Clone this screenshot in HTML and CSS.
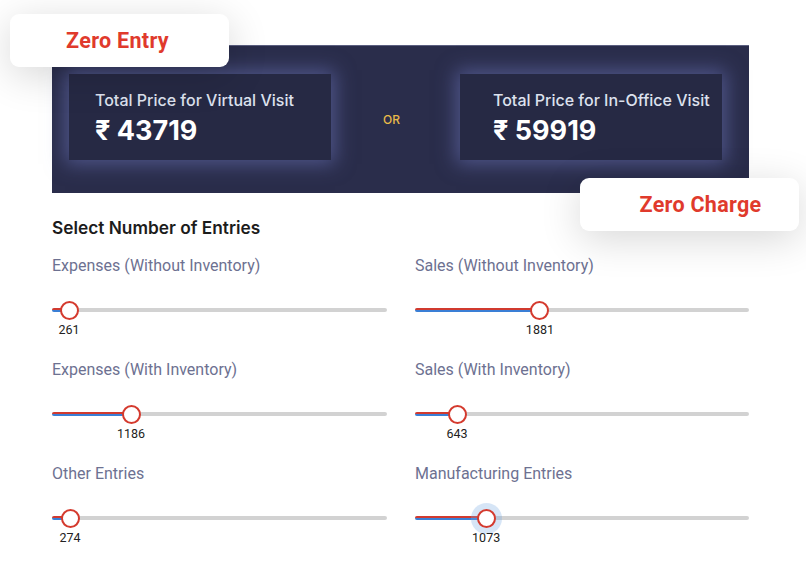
FILE: index.html
```html
<!DOCTYPE html>
<html>
<head>
<meta charset="utf-8">
<link rel="stylesheet" href="styles.css">
</head>
<body>
<div class="page">
  <div class="tag tag-entry">Zero Entry</div>
  <div class="tag tag-charge">Zero Charge</div>

  <div class="panel">
    <div class="price-box">
      <div class="price-title">Total Price for Virtual Visit</div>
      <div class="price-value">₹ 43719</div>
    </div>
    <div class="or">OR</div>
    <div class="price-box price-box-office">
      <div class="price-title">Total Price for In-Office Visit</div>
      <div class="price-value">₹ 59919</div>
    </div>
  </div>

  <h2 class="heading">Select Number of Entries</h2>

  <div class="grid">
    <div class="item">
      <div class="label">Expenses (Without Inventory)</div>
      <div class="slider">
        <div class="track"><div class="fill" style="width:5.1%"></div></div>
        <div class="thumb" style="left:5.1%"></div>
        <div class="value" style="left:5.1%">261</div>
      </div>
    </div>
    <div class="item">
      <div class="label">Sales (Without Inventory)</div>
      <div class="slider">
        <div class="track"><div class="fill" style="width:37.4%"></div></div>
        <div class="thumb" style="left:37.4%"></div>
        <div class="value" style="left:37.4%">1881</div>
      </div>
    </div>
    <div class="item">
      <div class="label">Expenses (With Inventory)</div>
      <div class="slider">
        <div class="track"><div class="fill" style="width:23.6%"></div></div>
        <div class="thumb" style="left:23.6%"></div>
        <div class="value" style="left:23.6%">1186</div>
      </div>
    </div>
    <div class="item">
      <div class="label">Sales (With Inventory)</div>
      <div class="slider">
        <div class="track"><div class="fill" style="width:12.6%"></div></div>
        <div class="thumb" style="left:12.6%"></div>
        <div class="value" style="left:12.6%">643</div>
      </div>
    </div>
    <div class="item">
      <div class="label">Other Entries</div>
      <div class="slider">
        <div class="track"><div class="fill" style="width:5.4%"></div></div>
        <div class="thumb" style="left:5.4%"></div>
        <div class="value" style="left:5.4%">274</div>
      </div>
    </div>
    <div class="item">
      <div class="label">Manufacturing Entries</div>
      <div class="slider">
        <div class="track"><div class="fill" style="width:21.3%"></div></div>
        <div class="thumb focus" style="left:21.3%"></div>
        <div class="value" style="left:21.3%">1073</div>
      </div>
    </div>
  </div>
</div>
</body>
</html>
```

FILE: styles.css
```css
* { box-sizing: border-box; }
html, body { margin: 0; padding: 0; background: #fff; }
body { width: 806px; height: 588px; overflow: hidden; font-family: Roboto, "Liberation Sans", sans-serif; }

.page {
  position: relative;
  padding: 45px 57px 0 52px;
}

.tag {
  position: absolute;
  width: 219px;
  height: 53px;
  background: #fff;
  border-radius: 9px;
  box-shadow: 0 8px 40px rgba(0, 0, 0, 0.16);
  display: flex;
  align-items: center;
  justify-content: center;
  color: #e03a2c;
  font-family: Roboto, "Liberation Sans", sans-serif;
  font-weight: 700;
  font-size: 21.5px;
  letter-spacing: 0.3px;
  z-index: 2;
}
.tag-entry { left: 10px; top: 14px; padding-right: 4px; }
.tag-charge { left: 580px; top: 178px; padding-left: 22px; }

.panel {
  width: 697px;
  height: 148px;
  background: #2a2d4b;
  border-top: 1px solid #5b5f80;
  display: flex;
  align-items: flex-start;
  padding: 28px 27px 0 17px;
}

.price-box {
  width: 262px;
  height: 86px;
  background: #262944;
  box-shadow: 0 0 18px 4px rgba(110, 118, 190, 0.55);
  padding: 16px 0 0 26px;
  color: #fff;
  font-family: Inter, "Noto Sans", sans-serif;
}
.price-box-office { padding-left: 33px; }
.price-title {
  font-size: 16px;
  font-weight: 500;
  color: #dde1ee;
  line-height: 21px;
}
.price-value {
  font-size: 27px;
  font-weight: 700;
  line-height: 32px;
  margin-top: 4px;
  font-family: Inter, "DejaVu Sans", sans-serif;
}

.or {
  flex: 1;
  text-align: center;
  margin-top: 38px;
  padding-right: 8px;
  color: #e9b949;
  font-family: Inter, sans-serif;
  font-size: 12px;
  font-weight: 500;
}

.heading {
  margin: 24px 0 0 0;
  font-family: Inter, Roboto, sans-serif;
  font-size: 17.3px;
  font-weight: 600;
  color: #1c1c1c;
  line-height: 22px;
}

.grid {
  display: grid;
  grid-template-columns: 335px 334px;
  column-gap: 28px;
  margin-top: 17px;
}

.item {
  height: 104px;
}

.label {
  font-size: 16px;
  color: #6d7191;
  line-height: 20px;
}

.slider {
  position: relative;
  margin-top: 32px;
  height: 4px;
}
.track {
  height: 4px;
  background: #d2d2d2;
  border-radius: 2px;
  overflow: hidden;
}
.fill {
  height: 4px;
  background: linear-gradient(#d13a2f 0, #d13a2f 55%, #3a7fd6 55%, #3a7fd6 100%);
}
.thumb {
  position: absolute;
  top: 2px;
  width: 19px;
  height: 19px;
  margin: -9.5px 0 0 -9.5px;
  border-radius: 50%;
  background: #fff;
  border: 2px solid #d43a2e;
}
.thumb.focus {
  box-shadow: 0 0 0 6px rgba(120, 170, 225, 0.3);
}
.value {
  position: absolute;
  top: 15px;
  transform: translateX(-50%);
  font-size: 12.5px;
  color: #222;
  line-height: 14px;
}
```
